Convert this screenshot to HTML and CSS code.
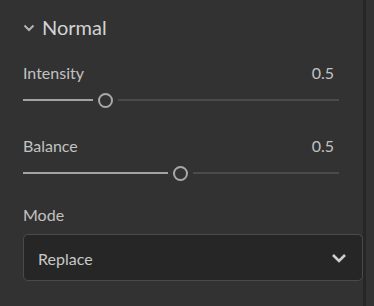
FILE: index.html
```html
<!DOCTYPE html>
<html lang="en">
<head>
    <meta charset="UTF-8">
    <meta name="viewport" content="width=device-width, initial-scale=1.0">
    <title>Normal</title>
    <link rel="stylesheet" href="styles.css">
</head>
<body>
    <div class="layout">
        <!-- PROPERTIES PANEL -->
        <div class="panel">
            <div class="section-head">
                <svg class="section-chevron" width="12" height="8" viewBox="0 0 12 8">
                    <path d="M1.5 1.5 L6 6 L10.5 1.5" fill="none" stroke="#b4b4b4" stroke-width="2"/>
                </svg>
                <span class="section-title">Normal</span>
            </div>

            <div class="field">
                <div class="field-row">
                    <span class="field-label">Intensity</span>
                    <span class="field-value">0.5</span>
                </div>
                <div class="slider">
                    <div class="slider-fill" style="width: 70px;"></div>
                    <div class="slider-thumb"></div>
                    <div class="slider-rest"></div>
                </div>
            </div>

            <div class="field">
                <div class="field-row">
                    <span class="field-label">Balance</span>
                    <span class="field-value">0.5</span>
                </div>
                <div class="slider">
                    <div class="slider-fill" style="width: 145px;"></div>
                    <div class="slider-thumb"></div>
                    <div class="slider-rest"></div>
                </div>
            </div>

            <div class="field field-mode">
                <div class="field-row">
                    <span class="field-label">Mode</span>
                </div>
                <div class="picker">
                    <span class="picker-text">Replace</span>
                    <svg class="picker-chevron" width="16" height="10" viewBox="0 0 16 10">
                        <path d="M2 2 L8 8 L14 2" fill="none" stroke="#cfcfcf" stroke-width="2.6"/>
                    </svg>
                </div>
            </div>
        </div>
        <div class="divider"></div>
        <div class="gutter"></div>
    </div>
</body>
</html>
```

FILE: styles.css
```css
html, body {
    margin: 0;
    height: 100%;
    background: #323232;
    font-family: Lato, "Open Sans", sans-serif;
}

.layout {
    display: flex;
    height: 100%;
}

.panel {
    width: 363px;
    padding: 15px 0 0 23px;
    box-sizing: border-box;
}

.divider {
    width: 3px;
    background: #262626;
}

.gutter {
    flex: 1;
}

/* Section header */
.section-head {
    display: flex;
    align-items: center;
    gap: 7px;
    height: 24px;
}

.section-chevron {
    margin-left: 0;
    margin-top: 1px;
}

.section-title {
    font-size: 20px;
    line-height: 24px;
    color: #d2d2d2;
}

/* Fields */
.field {
    width: 316px;
    margin-top: 24px;
}

.field + .field {
    margin-top: 28px;
}

.field.field-mode {
    margin-top: 24px;
    width: 340px;
}

.field-row {
    display: flex;
    justify-content: space-between;
    font-size: 16px;
    line-height: 20px;
    color: #c2c2c2;
}

.field-value {
    margin-right: 5px;
}

/* Slider */
.slider {
    display: flex;
    align-items: center;
    gap: 5px;
    height: 16px;
    margin-top: 9px;
}

.slider-fill {
    height: 2px;
    background: #a3a3a3;
}

.slider-thumb {
    width: 15px;
    height: 15px;
    box-sizing: border-box;
    border: 2.5px solid #a8a8a8;
    border-radius: 50%;
}

.slider-rest {
    flex: 1;
    height: 2px;
    background: #4b4b4b;
}

/* Dropdown */
.picker {
    display: flex;
    align-items: center;
    justify-content: space-between;
    height: 47px;
    margin-top: 9px;
    padding: 2px 15px 0 14px;
    box-sizing: border-box;
    background: #262626;
    border: 1px solid #4a4a4a;
    border-radius: 5px;
}

.picker-text {
    font-size: 16px;
    line-height: 20px;
    color: #c8c8c8;
}

.picker-chevron {
    margin-top: -1px;
}
```
